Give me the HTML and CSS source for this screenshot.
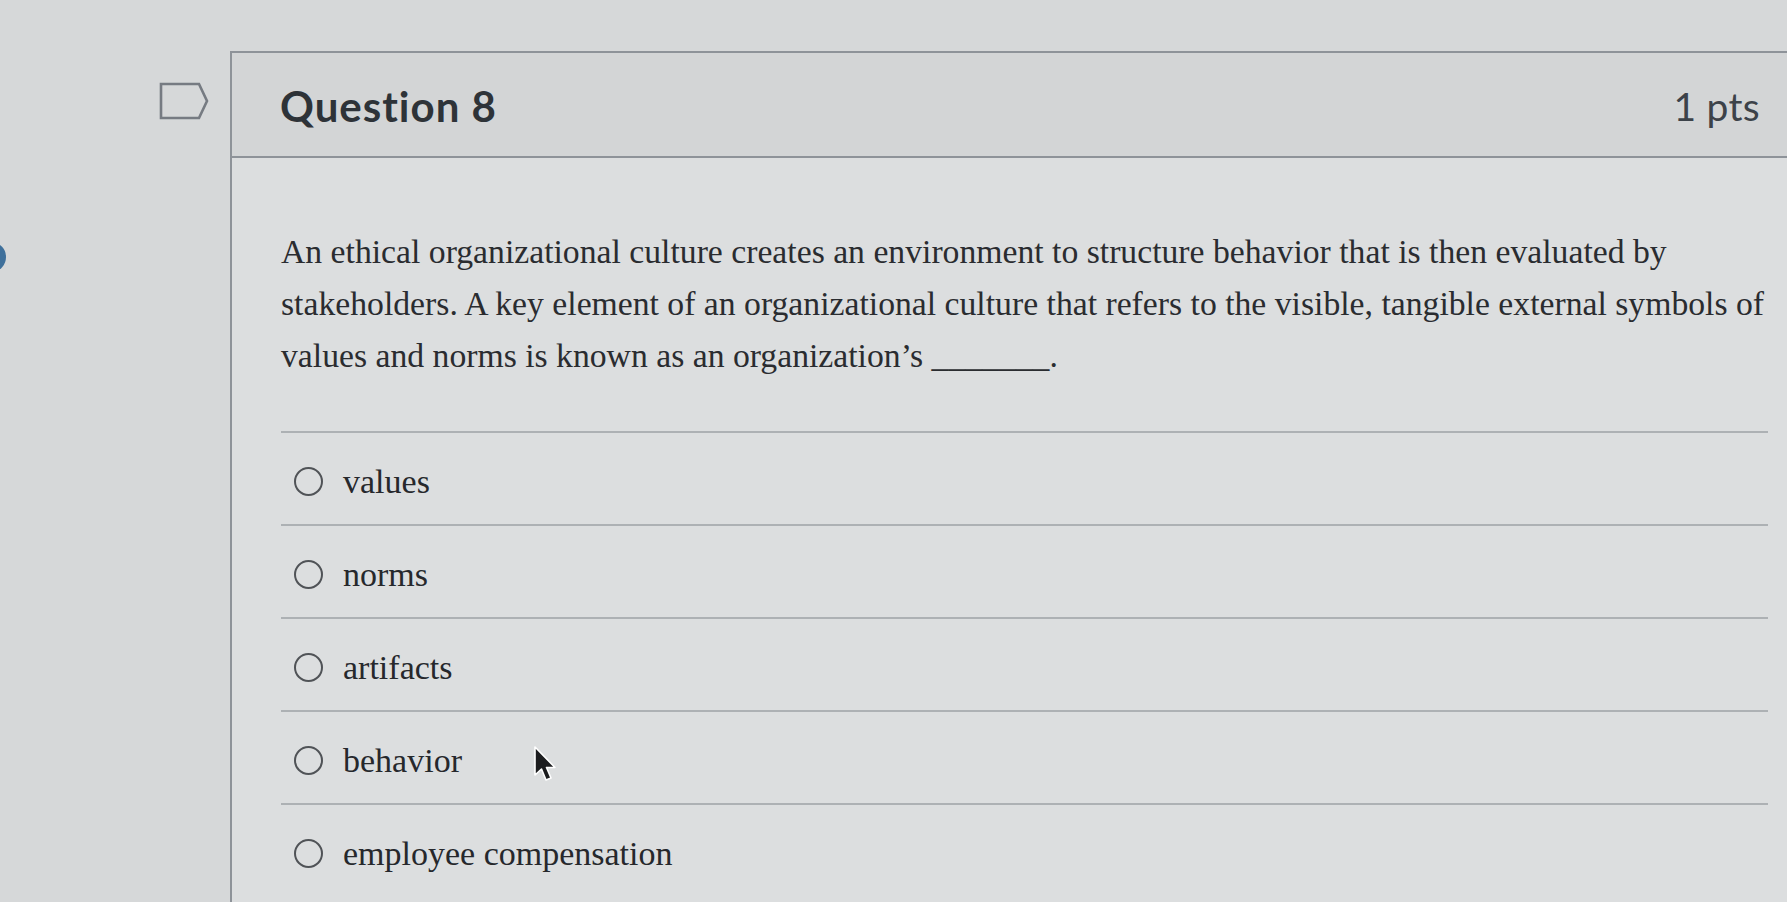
FILE: index.html
```html
<!DOCTYPE html>
<html lang="en">
<head>
<meta charset="utf-8">
<title>Question 8</title>
<link rel="stylesheet" href="styles.css">
</head>
<body>
<span class="edge-dot"></span>
<div class="page">
  <div class="gutter">
    <svg class="flag" width="50" height="38" viewBox="0 0 50 38" aria-hidden="true">
      <path d="M2 2 H40 L48 19 L40 36 H2 Z" fill="none" stroke="#767b82" stroke-width="2.6" stroke-linejoin="miter"/>
    </svg>
  </div>
  <section class="card">
    <header class="card-header">
      <h2 class="q-title">Question 8</h2>
      <span class="q-points">1 pts</span>
    </header>
    <div class="card-body">
      <p class="q-text">An ethical organizational culture creates an environment to structure behavior that is then evaluated by stakeholders. A key element of an organizational culture that refers to the visible, tangible external symbols of values and norms is known as an organization’s _______.</p>
      <ul class="answers">
        <li class="answer"><span class="radio"></span><span class="answer-label">values</span></li>
        <li class="answer"><span class="radio"></span><span class="answer-label">norms</span></li>
        <li class="answer"><span class="radio"></span><span class="answer-label">artifacts</span></li>
        <li class="answer"><span class="radio"></span><span class="answer-label">behavior</span></li>
        <li class="answer"><span class="radio"></span><span class="answer-label">employee compensation</span></li>
      </ul>
    </div>
  </section>
</div>
<svg class="cursor" width="26" height="40" viewBox="0 0 26 40" aria-hidden="true">
  <path d="M2 1 L2 29 L8.5 23 L13 34 L18 32 L13.5 21.5 L22 21.5 Z" fill="#1c1d1f" stroke="#ffffff" stroke-width="1.6" stroke-linejoin="round"/>
</svg>
</body>
</html>
```
FILE: styles.css
```css
html, body {
  margin: 0;
  padding: 0;
}

body {
  background: #d6d8d9;
  width: 1787px;
  height: 902px;
  overflow: hidden;
  position: relative;
  font-family: "Liberation Serif", "Times New Roman", serif;
  color: #2a2c30;
}

.page {
  display: flex;
  padding-top: 51px;
  height: 851px;
}

.gutter {
  width: 230px;
  flex-shrink: 0;
  display: flex;
  justify-content: flex-end;
  align-items: flex-start;
  padding-right: 21px;
  padding-top: 31px;
  box-sizing: border-box;
}

.flag {
  display: block;
}

.card {
  flex: 1;
  border-left: 2px solid #8e9399;
  border-top: 2px solid #8e9399;
  background: #dcdedf;
  display: flex;
  flex-direction: column;
}

.card-header {
  height: 103px;
  display: flex;
  align-items: center;
  justify-content: space-between;
  padding: 0 27px 0 48px;
  background: #d3d5d6;
  border-bottom: 2px solid #8e9399;
  font-family: Lato, "Open Sans", sans-serif;
}

.q-title {
  margin: 0;
  font-size: 42px;
  font-weight: 700;
  letter-spacing: 1px;
  color: #2e3338;
  padding-top: 2px;
}

.q-points {
  font-size: 39px;
  font-weight: 400;
  letter-spacing: 0.3px;
  color: #3c4249;
  padding-top: 2px;
}

.card-body {
  padding: 68px 12px 0 49px;
  flex: 1;
}

.q-text {
  margin: 0;
  font-size: 33.7px;
  line-height: 52px;
}

.answers {
  list-style: none;
  margin: 49px 0 0 0;
  padding: 0;
  width: 1487px;
}

.answer {
  border-top: 2px solid #adb1b4;
  display: flex;
  align-items: center;
  padding: 6px 0 0 13px;
  height: 85px;
}

.radio {
  width: 29px;
  height: 29px;
  box-sizing: border-box;
  border: 2.5px solid #505357;
  border-radius: 50%;
  flex-shrink: 0;
}

.answer-label {
  margin-left: 20px;
  font-size: 34px;
  color: #26282c;
}

.edge-dot {
  position: absolute;
  left: -19px;
  top: 243px;
  width: 25px;
  height: 28px;
  border-radius: 50%;
  background: #3f709b;
}

.cursor {
  position: absolute;
  left: 533px;
  top: 746px;
}
```
